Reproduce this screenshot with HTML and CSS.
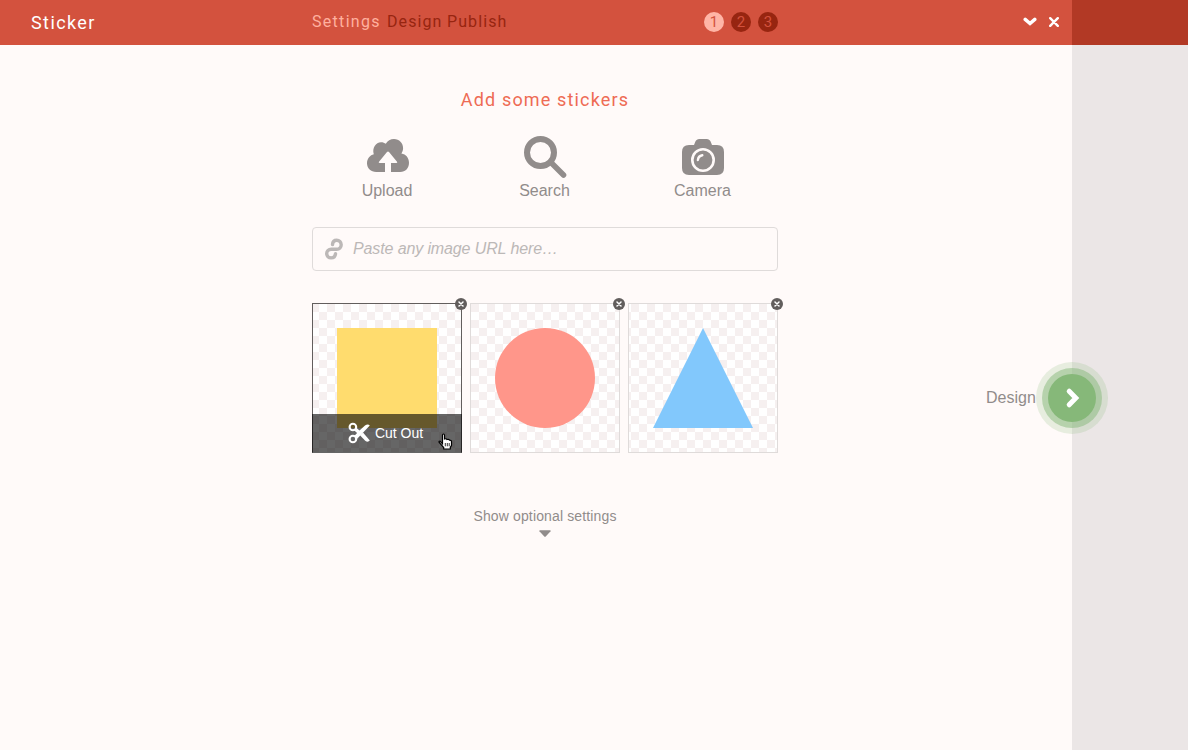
FILE: index.html
```html
<!DOCTYPE html>
<html lang="en">
<head>
<meta charset="utf-8">
<title>Sticker</title>
<link rel="stylesheet" href="styles.css">
</head>
<body>
<div class="app">
  <div class="panel">
    <header class="bar">
      <h1 class="brand">Sticker</h1>
      <nav class="steps">
        <span class="step step-on">Settings</span>
        <span class="step step-design">Design</span>
        <span class="step step-publish">Publish</span>
        <div class="dots">
          <span class="dot dot-on">1</span><span class="dot">2</span><span class="dot">3</span>
        </div>
      </nav>
      <div class="controls">
        <svg width="14" height="10" viewBox="0 0 14 10"><path d="M2.200 2.400 7 6.600l4.800-4.200" fill="none" stroke="#fff" stroke-width="3.400" stroke-linecap="round"/></svg>
        <svg width="10" height="10" viewBox="0 0 10 10"><path d="M1.200 1.200l7.600 7.600M8.800 1.200 1.200 8.800" stroke="#fff" stroke-width="2.400" stroke-linecap="round"/></svg>
      </div>
    </header>
    <main class="content">
      <h2 class="title">Add some stickers</h2>
      <div class="sources">
        <div class="source">
          <svg width="44" height="44" viewBox="-1 0 44 44"><path d="M10.200 37C4.900 37 1 33 1 28.200c0-4.800 3.300-8.200 6.800-9C5.900 13 9.800 7.200 15 7.200c2 0 3.500.6 4.800 1.600C21.500 6 24.500 4.100 28 4.100c5.200 0 9.100 4 9.100 9 0 2.200-.7 4-1.700 5.300C40 19 43 23 43 27.700 43 33 39.500 37 34.200 37H25v-9h5.500c.8 0 1-.7.500-1.200l-8-9.800c-.6-.7-1.400-.7-2 0l-8 9.800c-.5.500-.3 1.200.5 1.200H19v9z" fill="#918c8b"/></svg>
          <span>Upload</span>
        </div>
        <div class="source">
          <svg width="44" height="44" viewBox="0 0 44 44"><g fill="none" stroke="#918c8b"><circle cx="17.500" cy="17.500" r="13.500" stroke-width="6"/><path d="M28 27.500 40.500 40" stroke-width="5.600" stroke-linecap="round"/></g></svg>
          <span class="label-left">Search</span>
        </div>
        <div class="source">
          <svg width="44" height="44" viewBox="0 0 44 44"><path d="M8 10h5l1-2.500Q15 4 18.500 4h7Q29 4 30 7.500l1 2.500h5q7 0 7 7v16q0 7-7 7H8q-7 0-7-7V17q0-7 7-7z" fill="#918c8b"/><circle cx="22" cy="25" r="10.700" fill="none" stroke="#fffaf9" stroke-width="2.600"/><path d="M16.900 25a5.300 5.300 0 0 1 4.400-4.700" fill="none" stroke="#fffaf9" stroke-width="2.400" stroke-linecap="round"/></svg>
          <span class="label-left">Camera</span>
        </div>
      </div>
      <div class="field">
        <svg width="20" height="22" viewBox="0 0 20 22"><path d="M8.500 6.500C8.700 3.900 10.500 2.200 12.700 2.200c2.500 0 4.500 2 4.500 4.600 0 2.700-1.900 4.500-4.500 4.500H7.200c-2.600 0-4.500 1.800-4.500 4.200 0 2.600 2 4.400 4.400 4.400 2.400 0 4.200-1.700 4.400-4.200" fill="none" stroke="#bcb8b7" stroke-width="3.400" stroke-linecap="round"/></svg>
        <span>Paste any image URL here…</span>
      </div>
      <div class="cards">
        <div class="card card-hover">
          <svg class="art" width="100" height="100"><rect width="100" height="100" fill="#ffdc6e"/></svg>
          <div class="cutout">
            <svg width="22" height="22" viewBox="0 0 22 22"><g fill="none" stroke="#fff"><circle cx="4.900" cy="5" r="3.300" stroke-width="2.100"/><circle cx="4.900" cy="17" r="3.300" stroke-width="2.100"/></g><path d="M6.300 8.500 8.400 5.800 11.500 8.600 17 3.600Q19.800 1.400 21.800 3.400L8.700 17.200 6.200 14 9.100 11z" fill="#fff"/><path d="M12 13.300 15 10.600 21.800 18.500Q19.900 20.700 17.200 18.700z" fill="#fff"/></svg>
            <span>Cut Out</span>
          </div>
          <svg class="remove" width="12" height="12" viewBox="0 0 12 12"><circle cx="6" cy="6" r="6" fill="#625e5d"/><path d="M4 4l4 4M8 4 4 8" stroke="#fff" stroke-width="1.500" stroke-linecap="round"/></svg>
          <svg class="pointer" width="15" height="17" viewBox="0 0 15 17"><path d="M4.500 10.800V2.200q0-1.200 1-1.200t1 1.200V6q2-.7 2.500.5 2-.5 2.500.6 2-.1 2 1.700v3.500l-1.200 2.200V16H5.700v-1.400L1.200 9.500q-.5-1.500.8-1.500z" fill="#fff" stroke="#000" stroke-width="1.200"/><path d="M7.300 10v3.300M9.300 10v3.300M11.200 10v3.300" stroke="#000" stroke-width=".8"/></svg>
        </div>
        <div class="card">
          <svg class="art" width="100" height="100"><circle cx="50" cy="50" r="50" fill="#ff968a"/></svg>
          <svg class="remove" width="12" height="12" viewBox="0 0 12 12"><circle cx="6" cy="6" r="6" fill="#625e5d"/><path d="M4 4l4 4M8 4 4 8" stroke="#fff" stroke-width="1.500" stroke-linecap="round"/></svg>
        </div>
        <div class="card">
          <svg class="art" width="100" height="100"><path d="M50 0 100 100H0z" fill="#82c8fc"/></svg>
          <svg class="remove" width="12" height="12" viewBox="0 0 12 12"><circle cx="6" cy="6" r="6" fill="#625e5d"/><path d="M4 4l4 4M8 4 4 8" stroke="#fff" stroke-width="1.500" stroke-linecap="round"/></svg>
        </div>
      </div>
      <div class="more">
        <span>Show optional settings</span>
        <svg width="12" height="8" viewBox="0 0 13 8"><path d="M1 0h11q1 .2.500 1L7.300 6.700q-.8.700-1.600 0L.5 1Q0 .2 1 0z" fill="#918c8b"/></svg>
      </div>
    </main>
  </div>
  <aside class="side"><div class="side-top"></div></aside>
  <div class="next">
    <span>Design</span>
    <svg width="72" height="72" viewBox="0 0 72 72"><circle cx="36" cy="36" r="36" fill="#86b879" fill-opacity=".2"/><circle cx="36" cy="36" r="30" fill="#86b879" fill-opacity=".5"/><circle cx="36" cy="36" r="24" fill="#86b879"/><path d="M33.200 29.200 39.800 36l-6.600 6.800" fill="none" stroke="#fff" stroke-width="5" stroke-linecap="round"/></svg>
  </div>
</div>
</body>
</html>
```
FILE: styles.css
```css
* { box-sizing: border-box; }
body { margin: 0; background: #fffaf9; font-family: "Liberation Sans", Arial, sans-serif; color: #918c8b; }
svg { display: block; flex: none; }
.app { position: relative; display: flex; height: 750px; overflow: hidden; }
.panel { width: 1072px; }
.bar { display: grid; grid-template-columns: 281px 466px 1fr; align-items: center; height: 45px; padding: 0 13px 1px 31px; background: #d3523e; font-family: Roboto, sans-serif; }
.brand { margin: 0; font-size: 18px; font-weight: 400; line-height: 43px; letter-spacing: 1.4px; color: #fff; }
.steps { display: flex; align-items: center; font-size: 16px; line-height: 44px; letter-spacing: 1.1px; color: #972510; }
.step { width: 60px; white-space: nowrap; }
.step-on { width: 75px; letter-spacing: 1.3px; color: #ffb09f; }
.dots { display: flex; gap: 7px; margin-left: auto; }
.dot { width: 20px; height: 20px; border-radius: 50%; background: #972510; color: #d3523e; text-align: center; font-size: 15px; line-height: 20px; letter-spacing: 0; }
.dot-on { background: #ffb5a6; }
.controls { display: flex; justify-content: flex-end; align-items: center; gap: 12px; }
.content { width: 466px; margin-left: 312px; }
.title { margin: 0; padding-top: 43px; font-family: Roboto, sans-serif; font-size: 18px; font-weight: 400; line-height: 24px; letter-spacing: 1.15px; text-align: center; color: #ee6b54; }
.sources { display: grid; grid-template-columns: repeat(3, 150px); gap: 8px; margin-top: 23px; }
.source { display: flex; flex-direction: column; align-items: center; gap: 2px; font-size: 16px; line-height: 20px; }
.label-left { padding-right: 1px; }
.field { display: flex; align-items: center; gap: 9px; height: 44px; margin-top: 26px; padding-left: 11px; border: 1px solid #dfdbda; border-radius: 4px; font-size: 16px; font-style: italic; letter-spacing: -.12px; color: #bcb8b7; }
.cards { display: flex; gap: 8px; margin-top: 32px; }
.card { position: relative; display: grid; place-items: center; width: 150px; height: 150px; border: 1px solid #dfdbda; background: repeating-conic-gradient(#f6f0f0 0 25%, #fff 0 50%) -1px 0 / 16px 16px fixed; }
.card-hover { border-color: #625e5d; border-bottom-color: #fff; }
.remove { position: absolute; top: -6px; right: -6px; }
.cutout { position: absolute; left: -1px; right: -1px; bottom: -1px; display: flex; align-items: center; justify-content: center; gap: 5px; height: 39px; padding: 0 3px 1px 0; background: rgba(0, 0, 0, .6); color: #fff; font-size: 14px; }
.pointer { position: absolute; left: 125px; bottom: 2px; }
.more { display: flex; flex-direction: column; align-items: center; gap: 5px; margin-top: 55px; font-size: 14px; line-height: 17px; letter-spacing: .14px; }
.side { flex: 1; background: #ebe6e6; }
.side-top { height: 45px; background: #b23925; }
.next { position: absolute; top: 362px; left: 986px; display: flex; align-items: center; justify-content: space-between; width: 122px; font-size: 16px; }
```
